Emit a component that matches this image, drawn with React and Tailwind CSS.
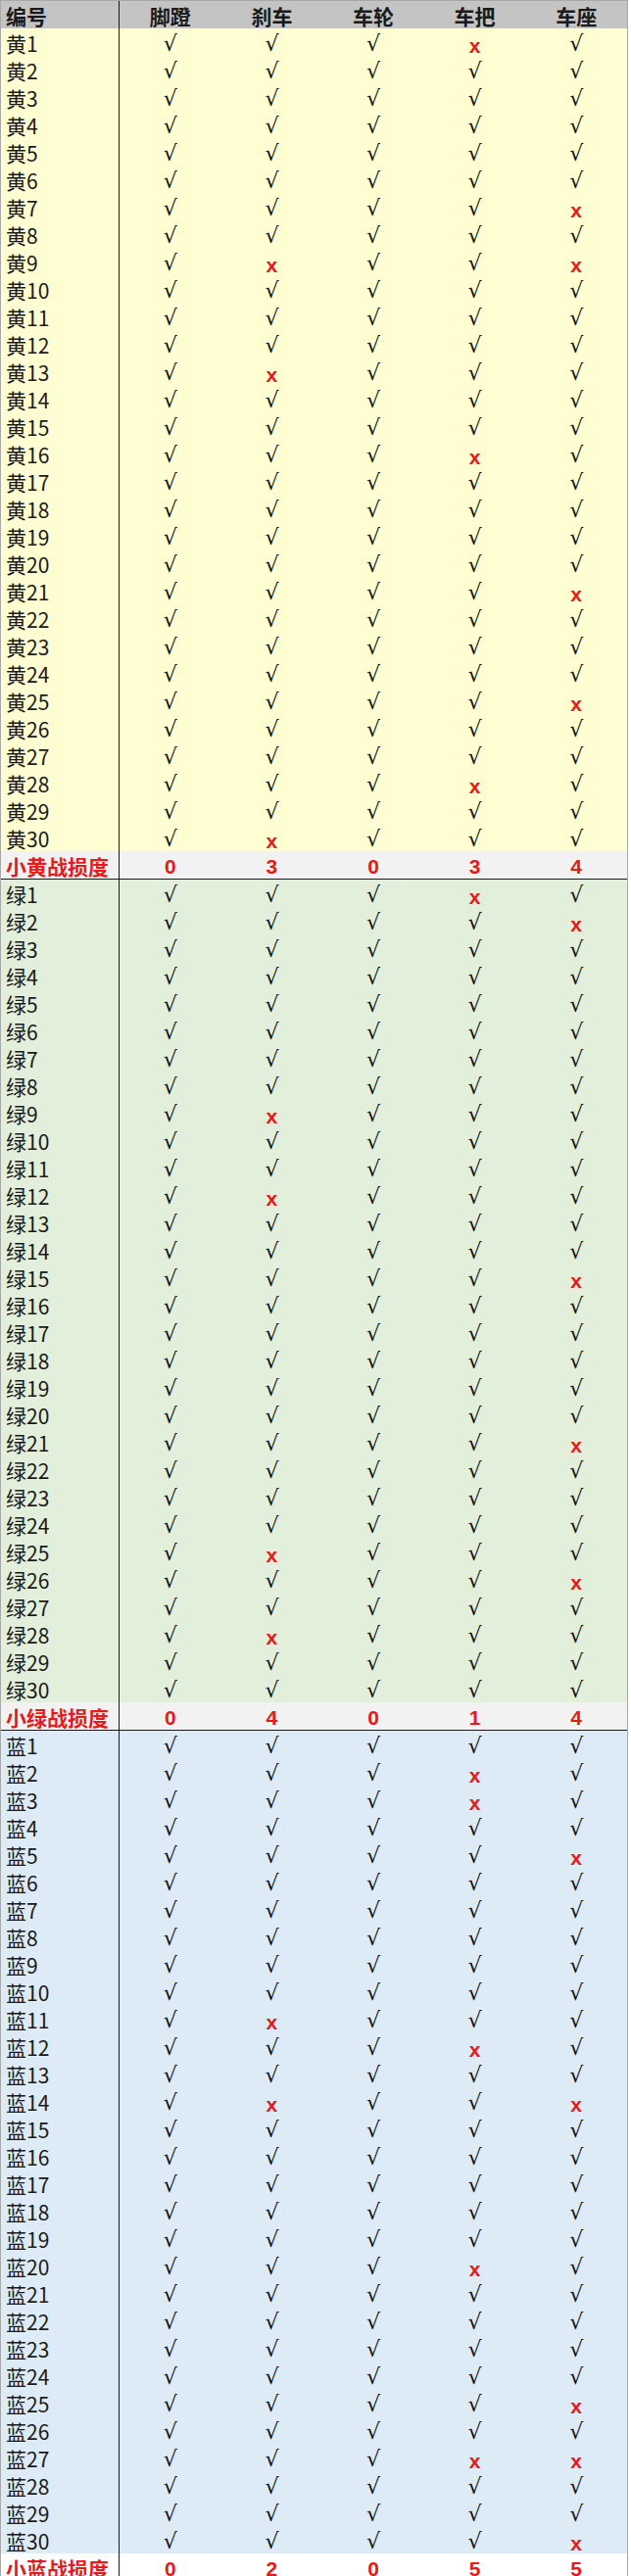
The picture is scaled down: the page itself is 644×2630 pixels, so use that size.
import React from 'react';

const cols = ['脚蹬', '刹车', '车轮', '车把', '车座'];

// which parts are broken, per row number: column indexes
const teams = [
  {
    name: '黄',
    bg: 'bg-[#fefed2]',
    sumBg: 'bg-[#f2f2f2]',
    line: true,
    broken: { 1: [3], 7: [4], 9: [1, 4], 13: [1], 16: [3], 21: [4], 25: [4], 28: [3], 30: [1] },
  },
  {
    name: '绿',
    bg: 'bg-[#e2efda]',
    sumBg: 'bg-[#f2f2f2]',
    line: true,
    broken: { 1: [3], 2: [4], 9: [1], 12: [1], 15: [4], 21: [4], 25: [1], 26: [4], 28: [1] },
  },
  {
    name: '蓝',
    bg: 'bg-[#ddebf7]',
    sumBg: 'bg-white',
    line: false,
    broken: { 2: [3], 3: [3], 5: [4], 11: [1], 12: [3], 14: [1, 4], 20: [3], 25: [4], 27: [3, 4], 30: [4] },
  },
];

const rowCls = 'grid grid-cols-[121px_repeat(5,minmax(0,1fr))] h-[28px]';
const firstCell = 'border-r border-[#1a1a1a] flex items-center pl-[5px] whitespace-nowrap';

const Mark = ({ bad }) =>
  bad ? (
    <span className="text-[#e31b1b] text-[21px] font-bold leading-none font-['Liberation_Sans',sans-serif] translate-y-[2px]">x</span>
  ) : (
    <span className="text-[#111] text-[22px] leading-none font-['DejaVu_Sans',sans-serif]">√</span>
  );

function Team({ team }) {
  const rows = Array.from({ length: 30 }, (_, i) => i + 1);
  const counts = cols.map((_, c) =>
    Object.values(team.broken).filter((list) => list.includes(c)).length
  );
  return (
    <div>
      {rows.map((n) => {
        const bad = team.broken[n] || [];
        return (
          <div key={n} className={`${rowCls} ${team.bg}`}>
            <div className={`${firstCell} text-[21px] text-[#1a1a1a]`}>
              {team.name}
              {n}
            </div>
            {cols.map((c, ci) => (
              <div key={c} className="flex items-center justify-center">
                <Mark bad={bad.includes(ci)} />
              </div>
            ))}
          </div>
        );
      })}
      <div className={`${rowCls} ${team.sumBg} ${team.line ? 'border-b border-[#1a1a1a] box-content' : ''}`}>
        <div className={`${firstCell} text-[21px] font-bold text-[#e31b1b]`}>小{team.name}战损度</div>
        {counts.map((v, i) => (
          <div key={i} className="flex items-center justify-center text-[21px] font-bold text-[#e31b1b] font-['Liberation_Sans',sans-serif]">
            {v}
          </div>
        ))}
      </div>
    </div>
  );
}

export default function App() {
  return (
    <div className="w-[644px] h-[2630px] bg-white overflow-hidden font-['Noto_Sans_CJK_SC',sans-serif]">
      <div className="w-[641px] border-l border-r border-t border-[#a8a8a8]">
        <div className={`${rowCls} bg-[#c4c4c4]`}>
          <div className={`${firstCell} text-[21px] font-bold text-[#1a1a1a]`}>编号</div>
          {cols.map((c) => (
            <div key={c} className="flex items-center justify-center text-[21px] font-bold text-[#1a1a1a]">
              {c}
            </div>
          ))}
        </div>
        {teams.map((t) => (
          <Team key={t.name} team={t} />
        ))}
      </div>
    </div>
  );
}
